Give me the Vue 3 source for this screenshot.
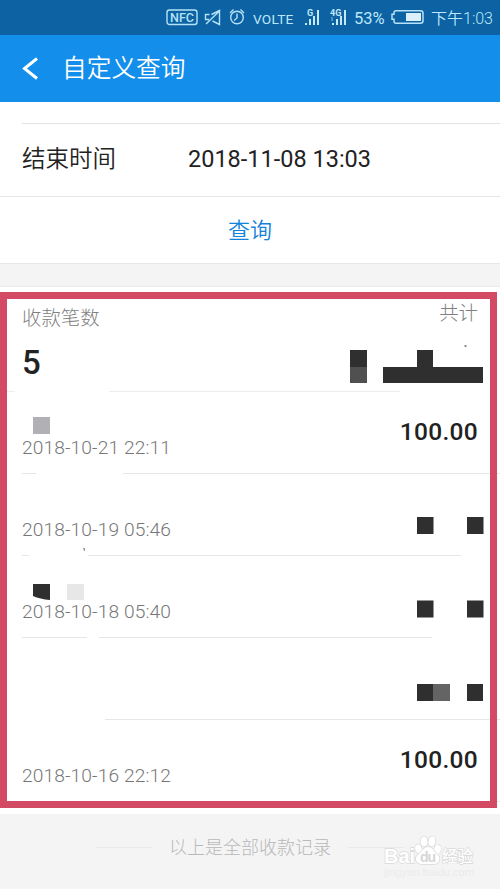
<script setup>
const records = [
  {
    time: '2018-10-21 22:11', amount: '100.00', rules: [[22, 36], [123, 500]],
    blocks: [{ x: 33, y: 25, c: '#b1b0b4' }],
  },
  {
    time: '2018-10-19 05:46', amount: '', rules: [[22, 29], [88, 461]],
    blocks: [{ x: 417, y: 43, w: 16.5, c: '#2f2f2f' }, { x: 467, y: 43, w: 16.5, c: '#2f2f2f' }],
  },
  {
    time: '2018-10-18 05:40', amount: '', rules: [[22, 87], [99, 432]],
    blocks: [{ x: 67, y: 28, h: 16, c: '#e7e7e7' }, { x: 417, y: 44.5, w: 16.5, c: '#2f2f2f' }, { x: 467, y: 44.5, w: 16.5, c: '#2f2f2f' }],
    clipped: true,
  },
  {
    time: '', amount: '', rules: [[105, 500]],
    blocks: [{ x: 417, y: 46, w: 16, c: '#2f2f2f' }, { x: 433, y: 46, c: '#646464' }, { x: 467, y: 46, w: 16, c: '#2f2f2f' }],
  },
  { time: '2018-10-16 22:12', amount: '100.00', rules: [[490, 500]], blocks: [] },
]
</script>

<template>
  <div class="screen">
    <div class="status">
      <svg class="status-icons" width="82" height="35" viewBox="0 0 82 35" fill="none" stroke="#b5e2f8" stroke-width="1.4">
        <rect x="1" y="10" width="30" height="14.5" rx="2.5" />
        <text x="4" y="21.7" class="nfc" textLength="24" lengthAdjust="spacingAndGlyphs">NFC</text>
        <path d="M45.500 14.500 53.500 10.500V24.500L46.500 21M43.500 14.500H39.500V19.500H43M54 10.500 40 24" />
        <circle cx="71" cy="17.500" r="6.300" />
        <path d="M71 13.500v4.500l-3 2.500M64 13l3.500-3.500M78 13l-3.500-3.500" />
      </svg>
      <span class="volte">VOLTE</span>
      <svg class="signals" width="44" height="35" viewBox="0 0 44 35" fill="#c4e9fb">
        <path d="M0 23h2v2H0zM4 19h2v6H4zM8 16h2v9H8zM12 10h2v15h-2z" />
        <text x="2" y="15.500" class="net">G</text>
        <path d="M27 23h2v2h-2zM31 19h2v6h-2zM35 16h2v9h-2zM39 10h2v15h-2z" />
        <text x="25" y="15.500" class="net">4G</text>
        <path d="M26 17h2v4h-2z" opacity=".35" />
      </svg>
      <span class="percent">53%</span>
      <svg class="battery" width="34" height="35" viewBox="0 0 34 35">
        <path d="M5 10.700h24.500q2.500 0 2.500 2.500v7.600q0 2.500-2.500 2.500H5q-2 0-2-2v-2H1v-5h2v-1.600q0-2 2-2z" fill="none" stroke="#b5e2f8" stroke-width="1.500" />
        <path d="M15 13h15v8H15z" fill="#dcf0fc" />
      </svg>
      <span class="clock">下午1:03</span>
    </div>

    <header class="bar">
      <svg class="back" width="18" height="26" viewBox="0 0 18 26" fill="none" stroke="#fff" stroke-width="3">
        <path d="M16 2.500 3.500 12.500 16 22.500" />
      </svg>
      <h1>自定义查询</h1>
    </header>

    <section class="form">
      <div class="field">
        <span class="label">结束时间</span>
        <span class="value">2018-11-08 13:03</span>
      </div>
      <button class="submit">查询</button>
    </section>

    <section class="panel">
      <div class="summary">
        <div class="count">
          <span class="caption">收款笔数</span>
          <strong>5</strong>
        </div>
        <span class="caption total">共计</span>
        <svg class="overlay" width="500" height="105" viewBox="0 0 500 105">
          <path d="M350 63h17v17h-17z" fill="#2f2f2f" />
          <path d="M350 80h17v16h-17z" fill="#505050" />
          <path d="M417 63h16v17h50v16H383V80h34z" fill="#2f2f2f" />
          <path d="M464.500 58h2v2h-2z" fill="#888" />
          <path d="M7 104.500h8M109 104.500h291" stroke="#ececf1" />
        </svg>
      </div>
      <div v-for="(r, i) in records" :key="i" class="record">
        <span class="time">{{ r.time }}</span>
        <span class="amount">{{ r.amount }}</span>
        <svg class="overlay" width="500" height="82" viewBox="0 0 500 82">
          <rect v-for="(b, k) in r.blocks" :key="k" :x="b.x" :y="b.y" :width="b.w || 17" :height="b.h || 17" :fill="b.c" />
          <path v-if="r.clipped" d="M33 28h17v16q-10-1-17-4z" fill="#2f2f2f" />
          <path v-if="i === 1" d="M83 74h2v3h-1z" fill="#999" />
          <path v-for="s in r.rules" :key="s[0]" :d="`M${s[0]} 81.500H${s[1]}`" stroke="#e6e6e6" />
        </svg>
      </div>
      <div class="frame"></div>
    </section>

    <footer class="end">
      <i></i><span>以上是全部收款记录</span><i></i>
      <svg class="mark" width="100" height="50" viewBox="0 0 100 50">
        <g class="logo">
          <ellipse cx="37.500" cy="19" rx="3.300" ry="4.500" transform="rotate(-15 37.500 19)" />
          <ellipse cx="43" cy="11.500" rx="3.500" ry="5" />
          <ellipse cx="51" cy="11.500" rx="3.500" ry="5" transform="rotate(10 51 11.500)" />
          <ellipse cx="56.500" cy="19.500" rx="3.300" ry="4.500" transform="rotate(20 56.500 19.500)" />
          <path d="M47 17c5 0 6 5 9 7 4 3 3 10-3 10H41c-7 0-8-7-3-10 3-2 4-7 9-7z" />
          <text x="3" y="32.500" class="bai" textLength="31" lengthAdjust="spacingAndGlyphs">Bai</text>
          <text x="61" y="32" class="jy" textLength="31" lengthAdjust="spacingAndGlyphs">经验</text>
        </g>
        <text x="39" y="31.500" class="du" textLength="16">du</text>
        <text x="3" y="46" class="url" textLength="90" lengthAdjust="spacingAndGlyphs">jingyan.baidu.com</text>
      </svg>
    </footer>
  </div>
</template>

<style>
body {
  margin: 0;
}
</style>

<style scoped>
.screen {
  display: flex;
  flex-direction: column;
  width: 500px;
  height: 889px;
  overflow: hidden;
  background: #f4f4f4;
  color: #222;
  font-family: Roboto, "Noto Sans CJK SC", sans-serif;
}
.status {
  display: flex;
  height: 35px;
  background: #0c62a2;
  color: #bce7fb;
  padding-left: 166px;
  white-space: nowrap;
  line-height: 35px;
}
.nfc {
  font: 500 12px Roboto, sans-serif;
  fill: #b5e2f8;
  stroke: none;
}
.net {
  font: 700 9px Roboto, sans-serif;
}
.volte {
  font-size: 13.7px;
  line-height: 39px;
  width: 42px;
  margin-left: 5px;
  letter-spacing: .2px;
}
.signals {
  margin-left: 10px;
}
.percent {
  font-size: 16.5px;
  line-height: 37px;
  width: 31px;
  margin-left: 5px;
}
.battery {
  margin-left: 6px;
}
.clock {
  font-size: 16px;
  font-weight: 350;
  line-height: 37px;
  margin-left: 6px;
}
.bar {
  display: flex;
  align-items: center;
  height: 67px;
  background: #138eeb;
  color: #fff;
  padding-left: 21px;
}
h1 {
  margin: 0 0 0 23px;
  font-size: 24.7px;
  line-height: 36px;
  font-weight: 350;
  padding-top: 1px;
}
.form {
  height: 140px;
  background: #fff;
  border-bottom: 1px solid #e8e8e8;
  padding-top: 21px;
}
.field {
  display: flex;
  align-items: center;
  height: 72px;
  border-top: 1px solid #e2e2e2;
  margin-left: 22px;
  font-size: 23.5px;
}
.label {
  width: 166px;
  font-weight: 350;
  padding-bottom: 6px;
}
.value {
  padding-bottom: 3px;
}
.submit {
  display: block;
  width: 500px;
  height: 67px;
  padding: 0 0 5px;
  background: none;
  border: 0;
  border-top: 1px solid #e6e6e6;
  color: #1582d8;
  font: 350 22px Roboto, "Noto Sans CJK SC", sans-serif;
}
.panel {
  position: relative;
  height: 527px;
  margin-top: 22px;
  border-top: 1px solid #ebebeb;
  background: #fff;
}
.summary {
  position: relative;
  display: flex;
  justify-content: space-between;
  height: 105px;
  padding: 0 22px;
  box-sizing: border-box;
}
.count {
  display: flex;
  flex-direction: column;
  padding-top: 17px;
}
.caption {
  font-size: 19.4px;
  font-weight: 300;
  line-height: 30px;
  color: #808080;
}
.total {
  padding-top: 12px;
}
strong {
  font-size: 33px;
  font-weight: 500;
  line-height: 40px;
  padding-top: 9px;
}
.record {
  position: relative;
  display: flex;
  justify-content: space-between;
  height: 82px;
  padding: 0 22px;
}
.time {
  align-self: flex-end;
  font-size: 19.2px;
  font-weight: 300;
  letter-spacing: .1px;
  line-height: 24px;
  padding-bottom: 14px;
  color: #777;
}
.amount {
  font-size: 24.5px;
  font-weight: 500;
  line-height: 30px;
  letter-spacing: .3px;
  padding-top: 25px;
}
.overlay {
  position: absolute;
  left: 0;
  top: 0;
}
.frame {
  position: absolute;
  left: 0;
  top: 5px;
  width: 483px;
  height: 502px;
  border: 7px solid #d34a64;
}
.end {
  position: relative;
  display: flex;
  justify-content: center;
  align-items: center;
  gap: 17px;
  height: 67px;
  color: #b8b8b8;
  font-size: 18px;
}
.end span {
  font-weight: 300;
  padding-bottom: 4px;
}
.end i {
  width: 56px;
  height: 1px;
  background: #e9e9e9;
}
.mark {
  position: absolute;
  left: 381px;
  top: 16px;
}
.logo {
  fill: #fff;
  stroke: #d9d9d9;
  stroke-width: 1.4;
  paint-order: stroke;
}
.bai {
  font: 700 20px "Liberation Sans", sans-serif;
}
.du {
  font: 700 14px "Liberation Sans", sans-serif;
  fill: #d6d6d6;
}
.jy {
  font: 500 16px "Noto Sans CJK SC", sans-serif;
}
.url {
  font: 11px "Liberation Sans", sans-serif;
  fill: #ebebeb;
}
</style>
